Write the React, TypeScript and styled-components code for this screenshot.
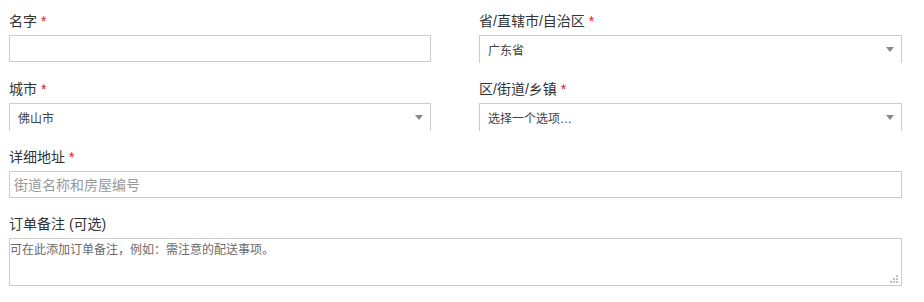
import React from 'react'
import styled, { createGlobalStyle } from 'styled-components'

const GlobalStyle = createGlobalStyle`
  html, body {
    margin: 0;
    padding: 0;
    background: #ffffff;
  }
  body {
    font-family: "Liberation Sans", "Noto Sans CJK SC", sans-serif;
  }
`

const Form = styled.form`
  width: 893px;
  padding: 11px 0 0 9px;
  display: grid;
  grid-template-columns: 422px 423px;
  column-gap: 48px;
  align-items: start;
`

const Field = styled.div<{ wide?: boolean }>`
  display: flex;
  flex-direction: column;
  margin-bottom: 16px;
  grid-column: ${({ wide }) => (wide ? '1 / span 2' : 'auto')};
`

const Label = styled.label`
  font-size: 14px;
  line-height: 20px;
  height: 20px;
  color: #333333;
  margin-bottom: 4px;
  white-space: nowrap;
`

const Required = styled.abbr`
  color: #e4141b;
  text-decoration: none;
  border: 0;
`

const TextInput = styled.input`
  box-sizing: border-box;
  width: 100%;
  height: 27px;
  margin: 0;
  padding: 0 4px;
  border: 1px solid #cccccc;
  border-radius: 0;
  outline: none;
  font-family: "Liberation Sans", "Noto Sans CJK SC", sans-serif;
  font-size: 14px;
  color: #333333;
  background: #ffffff;

  &::placeholder {
    color: #9a9a9a;
  }
`

const SelectBox = styled.div`
  box-sizing: border-box;
  position: relative;
  height: 28px;
  border: 1px solid #cccccc;
  border-bottom: 0;
  padding: 0 24px 0 8px;
  display: flex;
  align-items: center;
  font-size: 12px;
  color: #444444;
  background: #ffffff;
`

const Arrow = styled.span`
  position: absolute;
  right: 7px;
  top: 11px;
  width: 0;
  height: 0;
  border-style: solid;
  border-width: 5px 4px 0 4px;
  border-color: #888888 transparent transparent transparent;
`

const NoteWrap = styled.div`
  position: relative;
  height: 48px;
`

const NoteArea = styled.textarea`
  box-sizing: border-box;
  display: block;
  width: 100%;
  height: 48px;
  margin: 0;
  padding: 3px 0;
  border: 1px solid #cccccc;
  border-radius: 0;
  outline: none;
  resize: none;
  font-family: "Liberation Sans", "Noto Sans CJK SC", sans-serif;
  font-size: 12px;
  line-height: 16px;
  color: #333333;

  &::placeholder {
    color: #6a6a6a;
  }
`

const Grip = styled.svg`
  position: absolute;
  right: 4px;
  bottom: 3px;
  pointer-events: none;
`

const Select = ({ value }: { value: string }) => (
  <SelectBox>
    {value}
    <Arrow />
  </SelectBox>
)

const App = () => {
  return (
    <>
      <GlobalStyle />
      <Form onSubmit={(e) => e.preventDefault()}>
        <Field>
          <Label>
            名字 <Required title="必填">*</Required>
          </Label>
          <TextInput type="text" />
        </Field>
        <Field>
          <Label>
            省/直辖市/自治区 <Required title="必填">*</Required>
          </Label>
          <Select value="广东省" />
        </Field>
        <Field>
          <Label>
            城市 <Required title="必填">*</Required>
          </Label>
          <Select value="佛山市" />
        </Field>
        <Field>
          <Label>
            区/街道/乡镇 <Required title="必填">*</Required>
          </Label>
          <Select value="选择一个选项…" />
        </Field>
        <Field wide>
          <Label>
            详细地址 <Required title="必填">*</Required>
          </Label>
          <TextInput type="text" placeholder="街道名称和房屋编号" />
        </Field>
        <Field wide>
          <Label>订单备注 (可选)</Label>
          <NoteWrap>
            <NoteArea placeholder="可在此添加订单备注，例如：需注意的配送事项。" />
            <Grip width="8" height="8" viewBox="0 0 8 8">
              <g fill="#c2c2c2">
                <rect x="6" y="0" width="2" height="2" />
                <rect x="3" y="3" width="2" height="2" />
                <rect x="6" y="3" width="2" height="2" />
                <rect x="0" y="6" width="2" height="2" />
                <rect x="3" y="6" width="2" height="2" />
                <rect x="6" y="6" width="2" height="2" />
              </g>
            </Grip>
          </NoteWrap>
        </Field>
      </Form>
    </>
  )
}

export default App
